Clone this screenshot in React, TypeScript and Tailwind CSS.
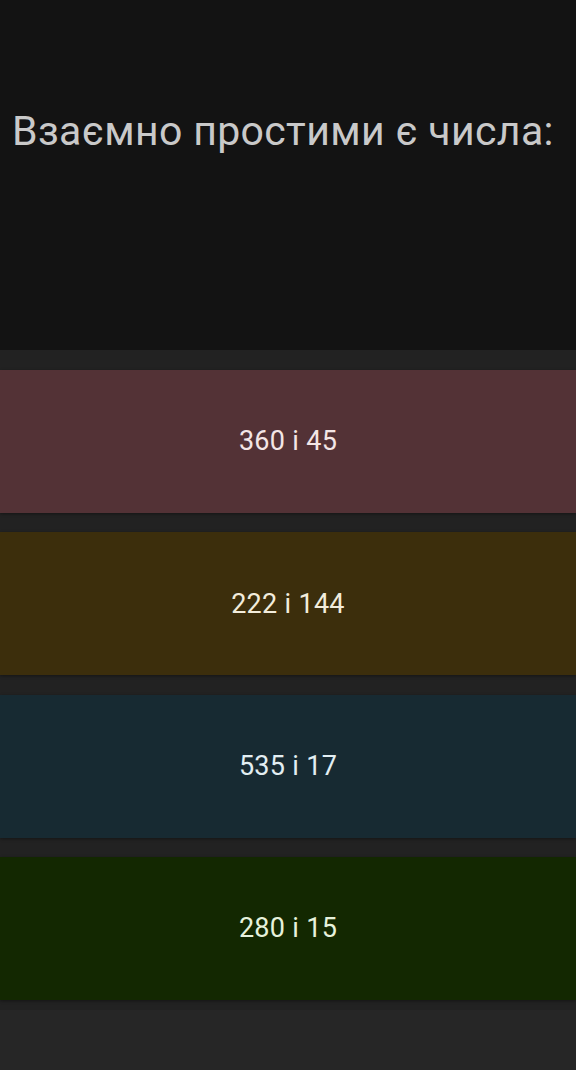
const options = [
  { label: "360 і 45", bg: "bg-[#533236]", text: "text-[#f3e6e6]" },
  { label: "222 і 144", bg: "bg-[#3c2e0c]", text: "text-[#f2ecdc]" },
  { label: "535 і 17", bg: "bg-[#172a32]", text: "text-[#e2eef2]" },
  { label: "280 і 15", bg: "bg-[#132801]", text: "text-[#e6f2dc]" },
];

export default function App() {
  return (
    <div className="min-h-[1070px] bg-[#262626] font-['Roboto',sans-serif]">
      <div className="h-[350px] bg-[#131313] pt-[107px] pl-3">
        <h1 className="text-[41px] leading-[48px] tracking-[0.35px] text-[#c9c9c9]">Взаємно простими є числа:</h1>
      </div>
      <div className="flex flex-col gap-[19.4px] bg-[#222222] pt-5 pb-[10px]">
        {options.map((o) => (
          <div
            key={o.label}
            className={`flex h-[143px] items-center justify-center shadow-[0_1px_3px_rgba(0,0,0,0.4)] ${o.bg}`}
          >
            <span className={`text-[27px] tracking-[0.3px] ${o.text}`}>{o.label}</span>
          </div>
        ))}
      </div>
    </div>
  );
}
